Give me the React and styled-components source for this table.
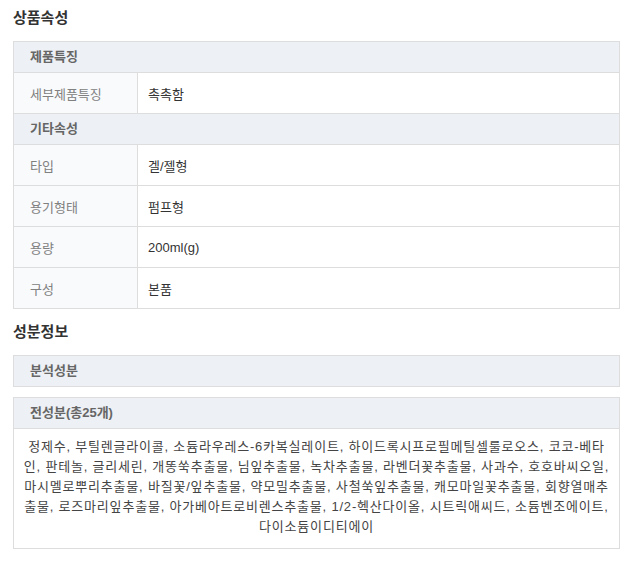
import React from 'react'
import styled, { createGlobalStyle } from 'styled-components'

const Global = createGlobalStyle`
  body {
    margin: 0;
    background: #fff;
    font-family: "Liberation Sans", "Noto Sans CJK KR", sans-serif;
    color: #333;
  }
`

const Page = styled.div`
  padding: 5px 13px 0 13px;
  width: 607px;
`

const Title = styled.h3`
  margin: 0;
  height: 26px;
  line-height: 26px;
  font-size: 15px;
  font-weight: 700;
  color: #333;
`

const Table = styled.div`
  margin-top: 10px;
  border-left: 1px solid #ddd;
  border-right: 1px solid #ddd;
  border-top: 1px solid #ddd;
`

const GroupHead = styled.div`
  height: 30px;
  line-height: 30px;
  padding-left: 16px;
  background: #edf0f4;
  border-bottom: 1px solid #ddd;
  font-size: 13px;
  font-weight: 700;
  color: #666;
`

const Row = styled.div`
  display: grid;
  grid-template-columns: 124px 1fr;
  height: 40px;
  border-bottom: 1px solid #ddd;
  font-size: 13px;
`

const Label = styled.div`
  display: flex;
  align-items: center;
  padding-left: 16px;
  background: #f9fafc;
  border-right: 1px solid #ddd;
  color: #808080;
`

const Value = styled.div`
  display: flex;
  align-items: center;
  padding-left: 10px;
  color: #333;
`

const Section = styled.div`
  margin-top: 10px;
`

const Box = styled.div`
  margin-top: ${p => p.$gap}px;
  border: 1px solid #ddd;
`

const BoxHead = styled.div`
  height: 30px;
  line-height: 30px;
  padding-left: 16px;
  background: #edf0f4;
  font-size: 13px;
  font-weight: 700;
  color: #666;
  border-bottom: ${p => (p.$open ? '1px solid #ddd' : 'none')};
`

const BoxBody = styled.div`
  padding: 8px 8px 11px;
  text-align: center;
  font-size: 13px;
  line-height: 20px;
  letter-spacing: 0.8px;
  color: #444;
`

const ingredients =
  '정제수, 부틸렌글라이콜, 소듐라우레스-6카복실레이트, 하이드록시프로필메틸셀룰로오스, 코코-베타인, 판테놀, 글리세린, 개똥쑥추출물, 님잎추출물, 녹차추출물, 라벤더꽃추출물, 사과수, 호호바씨오일, 마시멜로뿌리추출물, 바질꽃/잎추출물, 약모밀추출물, 사철쑥잎추출물, 캐모마일꽃추출물, 회향열매추출물, 로즈마리잎추출물, 아가베아트로비렌스추출물, 1/2-헥산다이올, 시트릭애씨드, 소듐벤조에이트, 다이소듐이디티에이'

const groups = [
  { head: '제품특징', rows: [['세부제품특징', '촉촉함']] },
  {
    head: '기타속성',
    rows: [
      ['타입', '겔/젤형'],
      ['용기형태', '펌프형'],
      ['용량', '200ml(g)'],
      ['구성', '본품'],
    ],
  },
]

export default function App() {
  return (
    <Page>
      <Global />
      <Title>상품속성</Title>
      <Table>
        {groups.map(g => (
          <React.Fragment key={g.head}>
            <GroupHead>{g.head}</GroupHead>
            {g.rows.map(([k, v]) => (
              <Row key={k}>
                <Label>{k}</Label>
                <Value>{v}</Value>
              </Row>
            ))}
          </React.Fragment>
        ))}
      </Table>
      <Section>
        <Title>성분정보</Title>
        <Box $gap={10}>
          <BoxHead>분석성분</BoxHead>
        </Box>
        <Box $gap={10}>
          <BoxHead $open>전성분(총25개)</BoxHead>
          <BoxBody>{ingredients}</BoxBody>
        </Box>
      </Section>
    </Page>
  )
}
